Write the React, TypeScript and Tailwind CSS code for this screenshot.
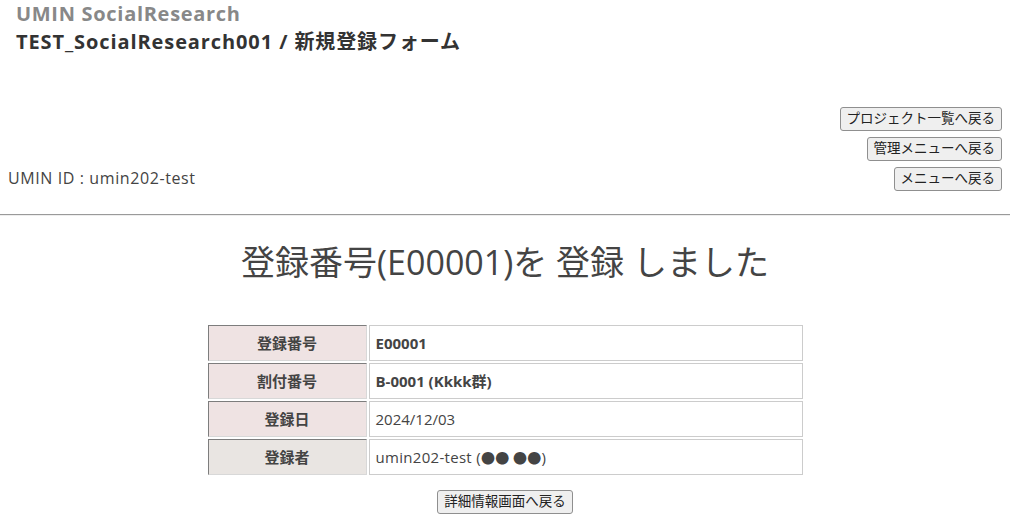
import React from 'react';

const font = { fontFamily: '"Open Sans", "Noto Sans CJK JP", sans-serif' };

function Btn({ children }: { children: React.ReactNode }) {
  return (
    <button className="h-[24px] px-[6px] text-[13.5px] leading-none text-[#222] bg-[#efefef] border border-[#8f8f8f] rounded-[3px]">
      {children}
    </button>
  );
}

const rows = [
  { label: '登録番号', value: 'E00001', bold: true, bg: 'bg-[#efe3e3]' },
  { label: '割付番号', value: 'B-0001 (Kkkk群)', bold: true, bg: 'bg-[#efe3e3]' },
  { label: '登録日', value: '2024/12/03', bold: false, bg: 'bg-[#efe3e3]' },
  { label: '登録者', value: null, bold: false, bg: 'bg-[#e9e5e2]' },
];

export default function App() {
  return (
    <div className="w-[1010px] h-[528px] bg-white text-[#444] overflow-hidden" style={font}>
      <header className="pl-4 pt-[2px]">
        <h1 className="text-[20px] font-bold leading-[24px] text-[#888] tracking-[0.7px]">UMIN SocialResearch</h1>
        <h2 className="mt-[4px] text-[20px] font-bold leading-[24px] text-[#333] tracking-[0.9px]">
          TEST_SocialResearch001 / 新規登録フォーム
        </h2>
      </header>

      <div className="mt-[53px] flex items-end justify-between pl-2 pr-[8px]">
        <div className="text-[16px] leading-[20px] mb-[3px] tracking-[0.6px]">UMIN ID : umin202-test</div>
        <div className="flex flex-col items-end gap-[6px]">
          <Btn>プロジェクト一覧へ戻る</Btn>
          <Btn>管理メニューへ戻る</Btn>
          <Btn>メニューへ戻る</Btn>
        </div>
      </div>

      <hr className="mt-[23px] border-t border-b border-t-[#9a9a9a] border-b-[#eeeeee]" />

      <h3 className="mt-[22px] text-center text-[34px] leading-[48px] text-[#444]">
        登録番号(E00001)を 登録 しました
      </h3>

      <div className="mt-[37px] flex flex-col items-center">
        <table className="border-separate border-spacing-[2px] w-[599px]">
          <tbody>
            {rows.map((r) => (
              <tr key={r.label}>
                <th
                  className={`w-[159px] h-[36px] ${r.bg} text-[15px] font-bold text-[#444] border border-t-[#7d7d7d] border-l-[#7d7d7d] border-r-[#d8d8d8] border-b-[#d8d8d8]`}
                >
                  {r.label}
                </th>
                <td
                  className={`h-[36px] px-[6px] text-[15px] text-left text-[#444] border border-[#cccccc] ${r.bold ? 'font-bold' : ''}`}
                >
                  {r.value ?? (
                    <span className="tracking-[0.3px]">
                      umin202-test (
                      <span className="font-['Noto_Sans_CJK_JP'] text-[14px]">●● ●●</span>)
                    </span>
                  )}
                </td>
              </tr>
            ))}
          </tbody>
        </table>
        <div className="mt-[11px]">
          <Btn>詳細情報画面へ戻る</Btn>
        </div>
      </div>
    </div>
  );
}
